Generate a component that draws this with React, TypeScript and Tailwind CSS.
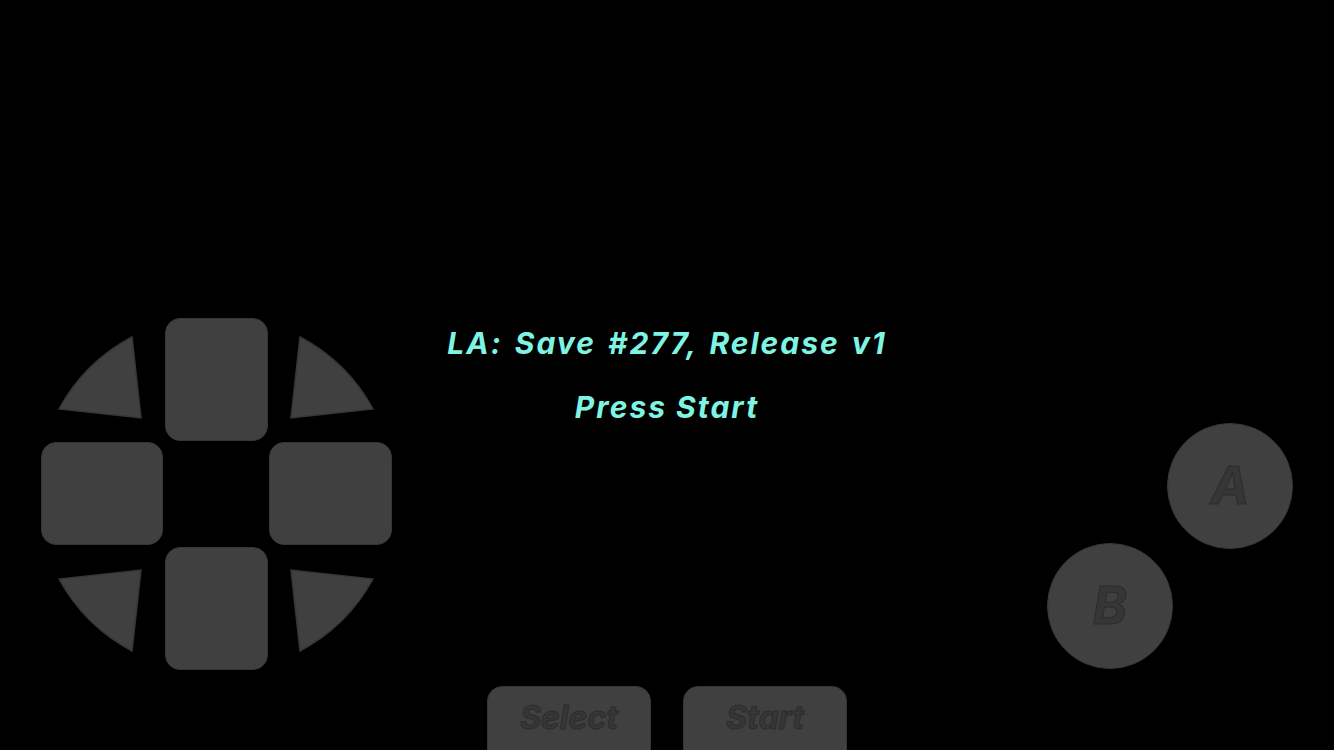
import React from "react";

const font = { fontFamily: '"Inter", "Open Sans", sans-serif' };

const pad = "bg-[#404040] border-[1.5px] border-[#363636]";

function Wedge({ box, d }: { box: string; d: string }) {
  return (
    <svg viewBox={box} className="h-full w-full">
      <path d={d} fill="#404040" stroke="#363636" strokeWidth="1.5" />
    </svg>
  );
}

function DPad() {
  return (
    <div className="grid grid-cols-[122px_106px_123px] grid-rows-[124px_104px_124px]">
      <Wedge box="41 318 122 124" d="M59 409 A178 178 0 0 1 132 337 L141 418 Z" />
      <div className="flex justify-center">
        <div className={`h-[123px] w-[103px] rounded-[15px] ${pad}`} />
      </div>
      <Wedge box="269 318 123 124" d="M373 409 A178 178 0 0 0 300 337 L291 418 Z" />

      <div className={`h-[103px] w-[122px] rounded-[15px] ${pad}`} />
      <div />
      <div className={`h-[103px] w-[123px] rounded-[15px] ${pad}`} />

      <Wedge box="41 546 122 124" d="M59 579 A178 178 0 0 0 132 651 L141 570 Z" />
      <div className="flex items-end justify-center">
        <div className={`h-[123px] w-[103px] rounded-[15px] ${pad}`} />
      </div>
      <Wedge box="269 546 123 124" d="M373 579 A178 178 0 0 1 300 651 L291 570 Z" />
    </div>
  );
}

function RoundButton({ label, className }: { label: string; className?: string }) {
  return (
    <div
      className={`flex h-[126px] w-[126px] items-center justify-center rounded-full ${pad} ${className ?? ""}`}
    >
      <span
        style={font}
        className="text-[52px] font-bold italic leading-none text-[#363636] [-webkit-text-stroke:1px_#2c2c2c]"
      >
        {label}
      </span>
    </div>
  );
}

function PillButton({ label }: { label: string }) {
  return (
    <div className={`flex h-[80px] w-[164px] justify-center rounded-[15px] pt-[12px] ${pad}`}>
      <span
        style={font}
        className="text-[32px] font-bold italic leading-[38px] text-[#363636] [-webkit-text-stroke:1px_#2c2c2c]"
      >
        {label}
      </span>
    </div>
  );
}

export default function App() {
  return (
    <div className="relative h-[750px] w-[1334px] overflow-hidden bg-black">
      {/* game screen */}
      <div
        style={font}
        className="flex flex-col items-center gap-[32px] pt-[327px] text-[30px] font-bold italic leading-[32px] tracking-[2px] text-[#7ff4e3]"
      >
        <p className="[word-spacing:3px]">LA: Save #277, Release v1</p>
        <p>Press Start</p>
      </div>

      {/* controller overlay */}
      <div className="absolute inset-0 flex flex-col">
        <div className="flex items-start justify-between px-[41px] pt-[318px]">
          <DPad />
          <div className="mt-[105px] flex w-[246px] flex-col">
            <RoundButton label="A" className="self-end" />
            <RoundButton label="B" className="-mt-[6px] self-start" />
          </div>
        </div>
        <div className="mt-[16px] flex justify-center gap-[32px]">
          <PillButton label="Select" />
          <PillButton label="Start" />
        </div>
      </div>
    </div>
  );
}
